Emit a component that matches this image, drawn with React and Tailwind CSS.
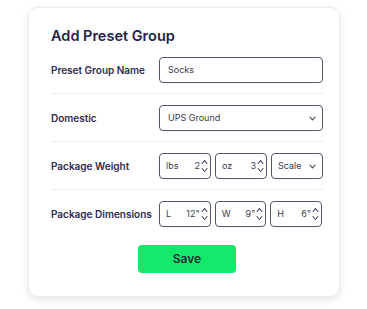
import React from 'react';

const Spinner = () => (
  <svg width="7" height="16" viewBox="0 0 7 16" className="shrink-0 text-[#4a4660]">
    <path d="M1 5.5 L3.5 2.5 L6 5.5" fill="none" stroke="currentColor" strokeWidth="1.1" strokeLinecap="round" strokeLinejoin="round" />
    <path d="M1 10.5 L3.5 13.5 L6 10.5" fill="none" stroke="currentColor" strokeWidth="1.1" strokeLinecap="round" strokeLinejoin="round" />
  </svg>
);

const Chevron = () => (
  <svg width="7" height="5" viewBox="0 0 7 5" className="shrink-0 text-[#4a4660]">
    <path d="M1 1.2 L3.5 3.8 L6 1.2" fill="none" stroke="currentColor" strokeWidth="1.1" strokeLinecap="round" strokeLinejoin="round" />
  </svg>
);

const boxCls = 'h-[26px] rounded-[4px] border-[1.5px] border-[#57536b] bg-white flex items-center text-[9px] text-[#3b3950]';

const NumBox = ({ unit, value }) => (
  <div className={`${boxCls} pl-[6px] pr-[2px]`}>
    <span className="flex-1">{unit}</span>
    <span className="mr-[1px]">{value}</span>
    <Spinner />
  </div>
);

const Row = ({ label, children, last }) => (
  <div className={`flex items-center ${last ? '' : 'border-b border-[#ececf1]'} pt-[11px] pb-[10px]`}>
    <div className="w-[108px] shrink-0 text-[10px] font-semibold text-[#2e2a50]">{label}</div>
    <div className="flex-1">{children}</div>
  </div>
);

export default function App() {
  return (
    <div className="w-[367px] h-[309px] bg-white pt-[7px] pl-[28px]" style={{ fontFamily: 'Inter, "Noto Sans", sans-serif' }}>
      <div className="w-[312px] rounded-[10px] border border-[#ededf0] bg-white pl-[22px] pr-[16px] pt-[18px] pb-[23px] shadow-[0_3px_8px_rgba(0,0,0,0.10)]">
        <h1 className="text-[14.5px] leading-[20px] font-semibold text-[#231f46]">Add Preset Group</h1>
        <Row label="Preset Group Name">
          <div className={`${boxCls} px-[8px]`}>Socks</div>
        </Row>
        <Row label="Domestic">
          <div className={`${boxCls} pl-[8px] pr-[6px] justify-between`}>
            <span>UPS Ground</span>
            <Chevron />
          </div>
        </Row>
        <Row label="Package Weight">
          <div className="grid grid-cols-3 gap-[4px]">
            <NumBox unit="lbs" value="2" />
            <NumBox unit="oz" value="3" />
            <div className={`${boxCls} pl-[6px] pr-[6px] justify-between`}>
              <span>Scale</span>
              <Chevron />
            </div>
          </div>
        </Row>
        <Row label="Package Dimensions" last>
          <div className="grid grid-cols-3 gap-[4px] pr-[1px]">
            <NumBox unit="L" value={'12"'} />
            <NumBox unit="W" value={'9"'} />
            <NumBox unit="H" value={'6"'} />
          </div>
        </Row>
        <div className="flex justify-center mt-[8px]">
          <button className="w-[98px] h-[28px] rounded-[4px] bg-[#14e86b] text-[12px] font-semibold text-[#1d2b3a]">Save</button>
        </div>
      </div>
    </div>
  );
}
